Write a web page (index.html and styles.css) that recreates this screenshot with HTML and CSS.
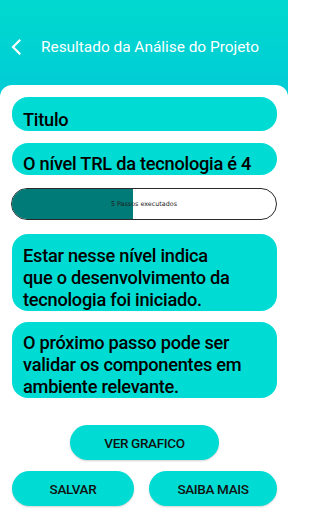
FILE: index.html
```html
<!DOCTYPE html>
<html lang="pt">
<head>
<meta charset="utf-8">
<link rel="stylesheet" href="styles.css">
</head>
<body>
<div class="screen">
  <header class="topbar">
    <svg class="back" width="10" height="16" viewBox="0 0 10 16"><path d="M8.5 1.5 L2 8 L8.5 14.5" fill="none" stroke="#ffffff" stroke-width="2.2" stroke-linecap="square"/></svg>
    <span class="title">Resultado da Análise do Projeto</span>
  </header>
  <main class="panel">
    <div class="card c1">Titulo</div>
    <div class="card c2">O nível TRL da tecnologia é 4</div>
    <div class="progress">
      <div class="fill" style="width:46%"></div>
      <span class="ptext">5 Passos executados</span>
    </div>
    <div class="card c3">Estar nesse nível indica<br>que o desenvolvimento da<br>tecnologia foi iniciado.</div>
    <div class="card c4">O próximo passo pode ser<br>validar os componentes em<br>ambiente relevante.</div>
    <div class="actions">
      <button class="btn btn-graph">VER GRAFICO</button>
      <div class="row">
        <button class="btn btn-save">SALVAR</button>
        <button class="btn btn-more">SAIBA MAIS</button>
      </div>
    </div>
  </main>
</div>
</body>
</html>
```

FILE: styles.css
```css
html, body {
  margin: 0;
  padding: 0;
  background: #ffffff;
}
body {
  width: 288px;
  height: 512px;
  overflow: hidden;
  font-family: Roboto, "Liberation Sans", sans-serif;
}
.screen {
  width: 288px;
  height: 512px;
  display: flex;
  flex-direction: column;
  background: linear-gradient(180deg, #00d9cf 0px, #00cbd6 100px, #ffffff 100px);
}
.topbar {
  height: 85px;
  display: flex;
  align-items: flex-start;
  padding-top: 38px;
  box-sizing: border-box;
}
.back {
  margin-left: 11px;
  margin-top: 1px;
  width: 10px;
  height: 16px;
}
.title {
  margin-left: 20px;
  color: #ffffff;
  font-size: 15.4px;
  line-height: 18px;
}
.panel {
  flex: 1;
  background: #ffffff;
  border-radius: 12px 12px 0 0;
  padding: 12px 11px 0 12px;
  display: flex;
  flex-direction: column;
}
.card {
  background: #00dcd3;
  border-radius: 16px;
  padding: 10px 8px 0 11px;
  font-size: 18.2px;
  font-weight: 500;
  letter-spacing: -0.25px;
  line-height: 22px;
  color: #000000;
  overflow: hidden;
  white-space: nowrap;
  box-sizing: border-box;
}
.c1 {
  height: 34px;
  padding-top: 12px;
}
.c2 {
  margin-top: 12px;
  height: 32px;
}
.progress {
  margin-top: 13px;
  margin-left: -1px;
  height: 32px;
  box-sizing: border-box;
  border: 1px solid #2a2a2a;
  border-radius: 16px;
  position: relative;
  overflow: hidden;
  background: #ffffff;
}
.fill {
  height: 100%;
  background: #007b77;
}
.ptext {
  position: absolute;
  left: 0;
  right: 0;
  top: 9px;
  text-align: center;
  font-family: "DejaVu Sans", sans-serif;
  font-size: 6.4px;
  line-height: 12px;
  color: #222222;
}
.c3 {
  margin-top: 14px;
  height: 77px;
  padding-top: 11px;
}
.c4 {
  margin-top: 11px;
  height: 76px;
  padding-top: 10px;
}
.actions {
  margin-top: 27px;
  display: flex;
  flex-direction: column;
  align-items: center;
}
.row {
  margin-top: 11px;
  width: 100%;
  display: flex;
  justify-content: space-between;
}
.btn {
  border: none;
  background: #00dcd3;
  border-radius: 18px;
  height: 35px;
  font-family: Roboto, "Liberation Sans", sans-serif;
  font-size: 13.5px;
  font-weight: 500;
  letter-spacing: -0.35px;
  color: #111111;
  padding: 0;
  box-shadow: 0 1px 2px rgba(0,0,0,0.18);
}
.btn-graph {
  width: 149px;
}
.btn-save {
  width: 122px;
}
.btn-more {
  width: 128px;
}
```
